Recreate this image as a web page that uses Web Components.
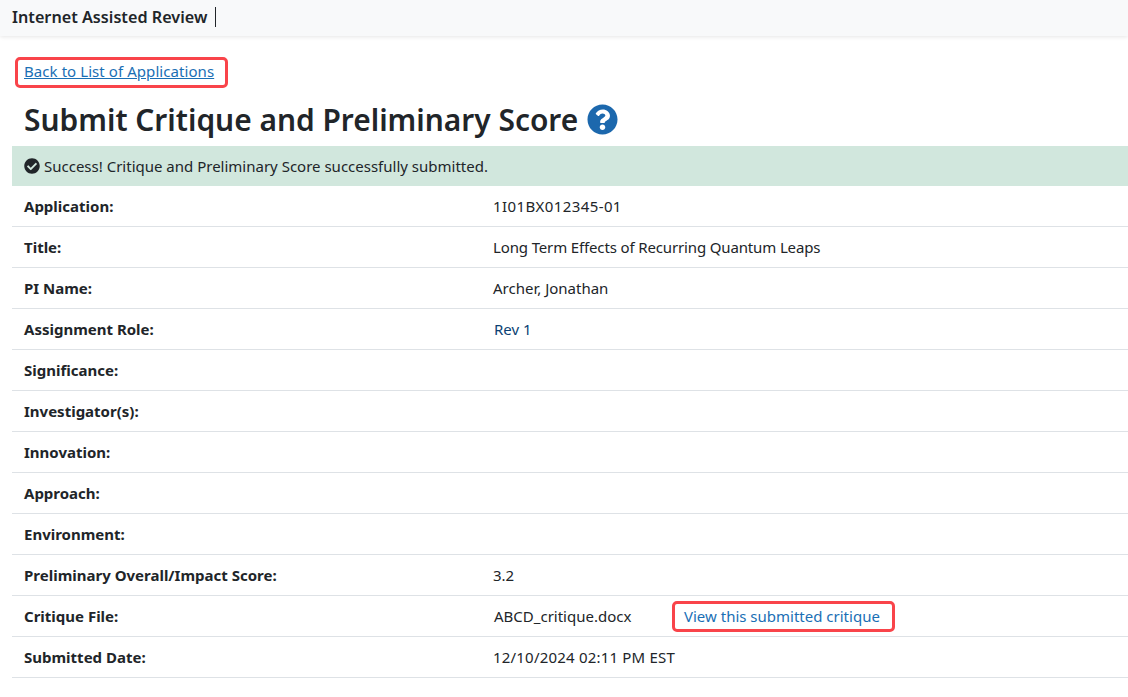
<!DOCTYPE html>
<html lang="en">
<head>
<meta charset="utf-8">
<title>Submit Critique and Preliminary Score</title>
<style>
html, body { margin: 0; padding: 0; background: #fff; overflow: hidden; }
body { font: 15px/20px "Noto Sans", "Open Sans", sans-serif; color: #212529; }
</style>
</head>
<body>
<iar-navbar>Internet Assisted Review</iar-navbar>
<iar-page>
  <iar-marked slot="back"><a href="#" style="color:#1a6fb5;letter-spacing:.07px">Back to List of Applications</a></iar-marked>
  <iar-heading slot="heading">Submit Critique and Preliminary Score</iar-heading>
  <iar-alert slot="alert">Success! Critique and Preliminary Score successfully submitted.</iar-alert>
  <iar-row label="Application:"><span style="letter-spacing:.4px">1I01BX012345-01</span></iar-row>
  <iar-row label="Title:"><span style="letter-spacing:-.14px">Long Term Effects of Recurring Quantum Leaps</span></iar-row>
  <iar-row label="PI Name:">Archer, Jonathan</iar-row>
  <iar-row label="Assignment Role:"><span style="color:#0b3f73;padding-left:1px">Rev 1</span></iar-row>
  <iar-row label="Significance:"></iar-row>
  <iar-row label="Investigator(s):"></iar-row>
  <iar-row label="Innovation:"></iar-row>
  <iar-row label="Approach:"></iar-row>
  <iar-row label="Environment:"></iar-row>
  <iar-row label="Preliminary Overall/Impact Score:">3.2</iar-row>
  <iar-row label="Critique File:">
    <span style="display:inline-block;width:179px;padding-left:1px;box-sizing:border-box">ABCD_critique.docx</span><iar-marked compact><a href="#" style="color:#1a6fb5;text-decoration:none">View this submitted critique</a></iar-marked>
  </iar-row>
  <iar-row label="Submitted Date:"><span style="letter-spacing:.2px">12/10/2024 02:11 PM EST</span></iar-row>
</iar-page>

<script>
class IarNavbar extends HTMLElement {
  constructor() {
    super();
    this.attachShadow({ mode: 'open' }).innerHTML = `
<style>
:host {
  display: flex;
  align-items: center;
  height: 36px;
  padding-left: 12px;
  background: #f8f9fa;
  box-shadow: 0 1px 4px rgba(0, 0, 0, .1);
  position: relative;
}
.brand {
  font-size: 16.2px;
  font-weight: 600;
  color: #212529;
  padding-right: 8px;
  border-right: 1px solid #212529;
  line-height: 20px;
  height: 20px;
  margin-top: -2px;
}
</style>
<div class="brand"><slot></slot></div>`;
  }
}

class IarPage extends HTMLElement {
  constructor() {
    super();
    this.attachShadow({ mode: 'open' }).innerHTML = `
<style>
:host { display: block; padding: 21px 0 0 12px; }
.back { padding-left: 3px; height: 31px; }
.heading { margin: 10px 0 5px; height: 43px; }
</style>
<div class="back"><slot name="back"></slot></div>
<div class="heading"><slot name="heading"></slot></div>
<slot name="alert"></slot>
<slot></slot>`;
  }
}

class IarMarked extends HTMLElement {
  constructor() {
    super();
    this.attachShadow({ mode: 'open' }).innerHTML = `
<style>
:host {
  display: inline-block;
  box-sizing: border-box;
  height: 31px;
  line-height: 23px;
  padding: 0 11px 0 6px;
  border: 3px solid #f9444a;
  border-radius: 5px;
}
:host([compact]) { padding: 0 12px 0 9px; line-height: 25px; }
</style>
<slot></slot>`;
  }
}

class IarHeading extends HTMLElement {
  constructor() {
    super();
    this.attachShadow({ mode: 'open' }).innerHTML = `
<style>
:host { display: flex; align-items: center; gap: 9px; padding-left: 12px; height: 43px; }
h1 { margin: 0; font-size: 29.9px; line-height: 43px; font-weight: 600; color: #212529; white-space: nowrap; }
svg { width: 31px; height: 31px; margin-top: -1px; fill: #1c68ad; flex: none; }
</style>
<h1><slot></slot></h1>
<svg viewBox="0 0 512 512" aria-hidden="true"><path d="M504 256c0 136.997-111.043 248-248 248S8 392.997 8 256C8 119.083 119.043 8 256 8s248 111.083 248 248zM262.655 90c-54.497 0-89.255 22.957-116.549 63.758-3.536 5.286-2.353 12.415 2.715 16.258l34.699 26.31c5.205 3.947 12.621 3.008 16.665-2.122 17.864-22.658 30.113-35.797 57.303-35.797 20.429 0 45.698 13.148 45.698 32.958 0 14.976-12.363 22.667-32.534 33.976C247.128 238.528 216 254.941 216 296v4c0 6.627 5.373 12 12 12h56c6.627 0 12-5.373 12-12v-1.333c0-28.462 83.186-29.647 83.186-106.667 0-58.002-60.165-102-116.531-102zM256 338c-25.365 0-46 20.635-46 46 0 25.364 20.635 46 46 46s46-20.636 46-46c0-25.365-20.635-46-46-46z"/></svg>`;
  }
}

class IarAlert extends HTMLElement {
  constructor() {
    super();
    this.attachShadow({ mode: 'open' }).innerHTML = `
<style>
:host {
  display: flex;
  align-items: center;
  gap: 4px;
  height: 40px;
  padding-left: 12px;
  background: #d1e7dd;
  color: #212529;
}
svg { width: 16px; height: 16px; fill: #212529; flex: none; }
</style>
<svg viewBox="0 0 512 512" aria-hidden="true"><path d="M504 256c0 136.967-111.033 248-248 248S8 392.967 8 256 119.033 8 256 8s248 111.033 248 248zM227.314 387.314l184-184c6.248-6.248 6.248-16.379 0-22.627l-22.627-22.627c-6.248-6.249-16.379-6.249-22.628 0L216 308.118l-70.059-70.059c-6.248-6.248-16.379-6.248-22.628 0l-22.627 22.627c-6.248 6.248-6.248 16.379 0 22.627l104 104c6.249 6.249 16.379 6.249 22.628.001z"/></svg>
<span><slot></slot></span>`;
  }
}

class IarRow extends HTMLElement {
  constructor() {
    super();
    this.attachShadow({ mode: 'open' }).innerHTML = `
<style>
:host {
  display: grid;
  grid-template-columns: 469px 1fr;
  align-items: center;
  box-sizing: border-box;
  height: 41px;
  padding-left: 12px;
  border-bottom: 1px solid #dee2e6;
}
.label { font-weight: 700; }
</style>
<div class="label"></div>
<div><slot></slot></div>`;
  }
  connectedCallback() {
    this.shadowRoot.querySelector('.label').textContent = this.getAttribute('label');
  }
}

customElements.define('iar-navbar', IarNavbar);
customElements.define('iar-page', IarPage);
customElements.define('iar-marked', IarMarked);
customElements.define('iar-heading', IarHeading);
customElements.define('iar-alert', IarAlert);
customElements.define('iar-row', IarRow);
</script>
</body>
</html>
